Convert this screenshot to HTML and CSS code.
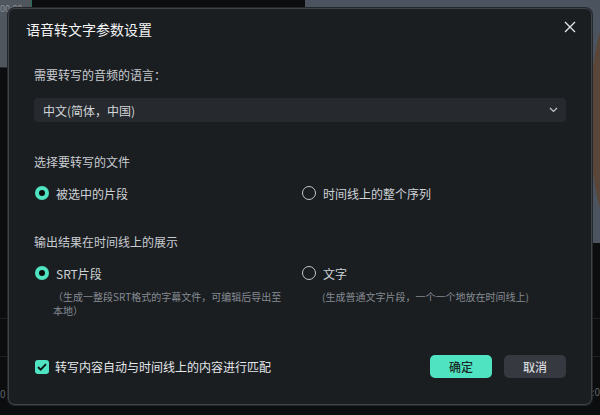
FILE: index.html
```html
<!DOCTYPE html>
<html lang="zh">
<head>
<meta charset="utf-8">
<link rel="stylesheet" href="styles.css">
</head>
<body>
<div class="app">
  <div class="thumb"><span class="thumb-time">00:00</span></div>
  <div class="preview"><div class="face"></div></div>
  <div class="track track-a"></div>
  <div class="track track-b"></div>
  <div class="tc-left">0</div>
  <div class="tc-right">:0</div>
</div>

<div class="dialog">
  <div class="header">
    <div class="title">语音转文字参数设置</div>
    <svg class="close" width="12" height="12" viewBox="0 0 12 12"><path d="M1 1L11 11M11 1L1 11" stroke="#e6e8ea" stroke-width="1.3" fill="none"/></svg>
  </div>
  <div class="body">
    <div class="label">需要转写的音频的语言：</div>
    <div class="select">
      <span>中文(简体，中国)</span>
      <svg width="9" height="6" viewBox="0 0 9 6"><path d="M1 1L4.5 4.5L8 1" stroke="#c4c8cc" stroke-width="1.2" fill="none"/></svg>
    </div>

    <div class="label gap-big">选择要转写的文件</div>
    <div class="options">
      <div class="option"><span class="radio on"></span><span>被选中的片段</span></div>
      <div class="option"><span class="radio"></span><span>时间线上的整个序列</span></div>
    </div>

    <div class="label gap-big">输出结果在时间线上的展示</div>
    <div class="options">
      <div class="opt-col">
        <div class="option"><span class="radio on"></span><span>SRT片段</span></div>
        <div class="hint hint-left">（生成一整段SRT格式的字幕文件，可编辑后导出至本地）</div>
      </div>
      <div class="opt-col">
        <div class="option"><span class="radio"></span><span>文字</span></div>
        <div class="hint">(生成普通文字片段，一个一个地放在时间线上)</div>
      </div>
    </div>
  </div>
  <div class="footer">
    <div class="check-row">
      <span class="checkbox"><svg width="10" height="8" viewBox="0 0 10 8"><path d="M1 4L3.7 6.7L9 1.2" stroke="#0d1110" stroke-width="1.8" fill="none"/></svg></span>
      <span>转写内容自动与时间线上的内容进行匹配</span>
    </div>
    <div class="buttons">
      <button class="btn primary">确定</button>
      <button class="btn">取消</button>
    </div>
  </div>
</div>
</body>
</html>
```

FILE: styles.css
```css
* { box-sizing: border-box; }
html, body {
  margin: 0;
  padding: 0;
  width: 600px;
  height: 415px;
  overflow: hidden;
  background: #0b0d0f;
  font-family: "Noto Sans CJK SC", "Noto Sans", sans-serif;
}
.app { position: relative; width: 600px; height: 415px; }
.thumb {
  position: absolute; left: 0; top: 0; width: 32px; height: 68px;
  background: #50565d;
  border-right: 1px solid #1f6d55;
  border-bottom: 1px solid #2a2e33;
}
.thumb-time { position: absolute; left: 0; top: 2px; font-size: 9px; color: #8b9096; }
.preview {
  position: absolute; left: 305px; top: 0; right: 0; height: 243px;
  background: #4b545e; overflow: hidden;
}
.face {
  position: absolute; right: -40px; top: 10px; width: 50px; height: 220px;
  border-radius: 50%; background: #5a4639;
}
.track { position: absolute; left: 0; right: 0; height: 1px; background: #1e2125; }
.track-a { top: 318px; }
.track-b { top: 356px; }
.tc-left { position: absolute; left: 0; top: 386px; font-size: 10px; color: #5d6268; }
.tc-right { position: absolute; right: 0; top: 384px; font-size: 10px; color: #5d6268; }

.dialog {
  position: absolute; left: 8px; top: 8px; width: 584px; height: 397px;
  background: #1b1e21;
  border: 1px solid #3f4349;
  border-radius: 7px;
  box-shadow: 0 0 0 1px #24272b;
  display: flex; flex-direction: column;
}
.header {
  height: 38px;
  display: flex; align-items: center; justify-content: space-between;
  padding: 0 15px 0 17px;
}
.title { font-size: 14px; color: #f2f4f6; line-height: 20px; margin-top: 2px; }
.close { margin-top: -2px; }
.body { padding: 19px 25px 0 25px; }
.label { font-size: 12px; line-height: 18px; color: #c8ccd1; }
.label.gap-big { margin-top: 31px; }
.select {
  margin-top: 14px; height: 24px;
  background: #26292d; border-radius: 4px;
  display: flex; align-items: center; justify-content: space-between;
  padding: 0 8px 0 9px;
  font-size: 12px; color: #d2d5d9;
}
.options {
  margin-top: 13px;
  display: grid; grid-template-columns: 267px 1fr;
}
.option {
  display: flex; align-items: center; gap: 7px;
  height: 18px; font-size: 12px; color: #ced2d6;
  padding-left: 1px;
}
.radio {
  width: 14px; height: 14px; border-radius: 50%;
  border: 1.5px solid #c2c6ca; position: relative; flex: none;
}
.radio.on { border: none; background: #4fe3c1; }
.radio.on::after {
  content: ""; position: absolute; left: 4px; top: 4px;
  width: 6px; height: 6px; border-radius: 50%; background: #0a0c0c;
}
.hint {
  margin-top: 8px; padding-left: 21px;
  font-size: 10px; line-height: 14px; color: #858b93;
}
.hint-left { padding-left: 19px; padding-right: 17px; }
.footer {
  margin-top: auto; height: 23px; margin-bottom: 26px;
  padding: 0 25px 0 26px;
  display: flex; align-items: center; justify-content: space-between;
}
.check-row { display: flex; align-items: center; gap: 6px; font-size: 12px; color: #e4e7ea; }
.checkbox {
  width: 14px; height: 14px; border-radius: 3px; background: #4fe3c1;
  display: flex; align-items: center; justify-content: center;
}
.buttons { display: flex; gap: 12px; }
.btn {
  width: 62px; height: 23px; border: none; border-radius: 5px;
  background: #363a40; color: #d6d9dd;
  font-family: inherit; font-size: 12px; font-weight: 500; padding: 0;
}
.btn.primary { background: #4fe3c1; color: #1c2a26; }
```
